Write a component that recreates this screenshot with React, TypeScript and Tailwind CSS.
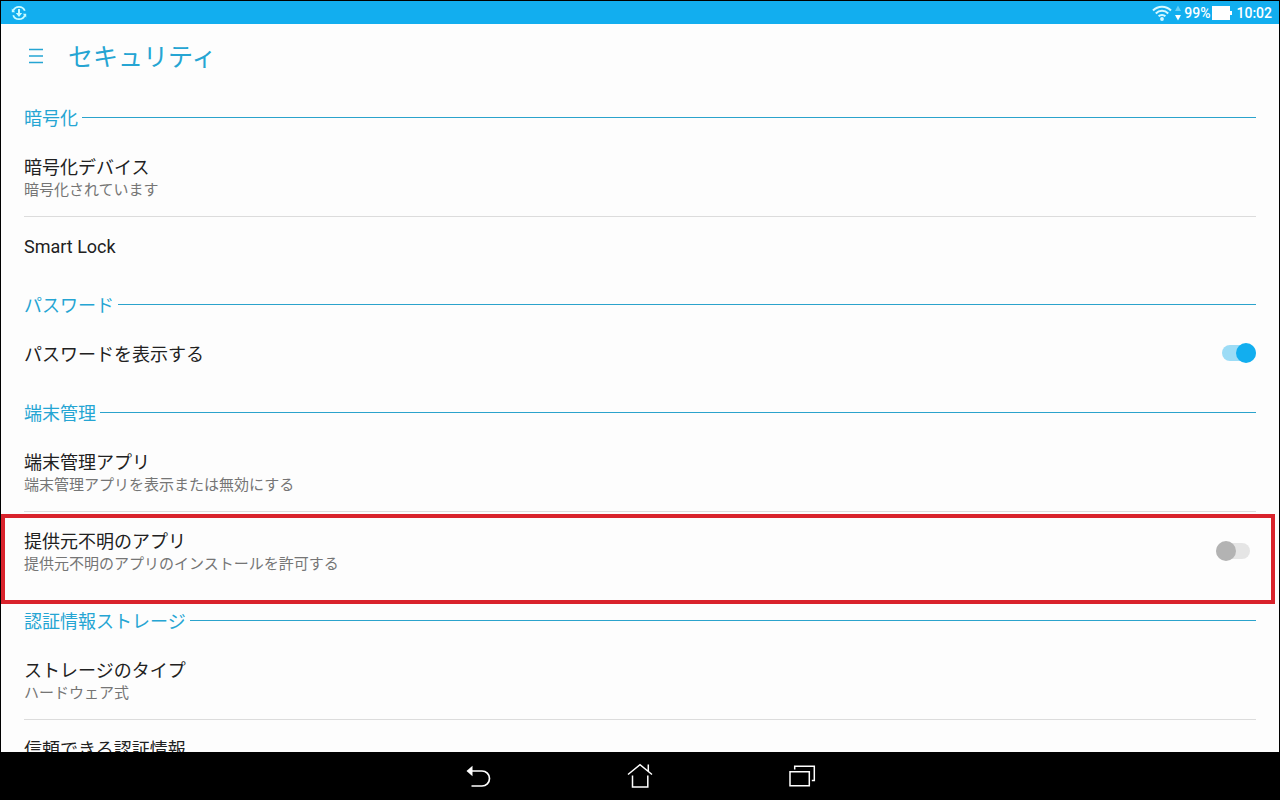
import { useState, type ReactNode } from "react";

function StatusBar() {
  return (
    <div className="flex h-[23px] shrink-0 items-center bg-[#12aeef] pl-1.5 pr-[7px] text-white">
      <svg viewBox="0 0 16 16" className="ml-1 size-4" fill="none" stroke="#c9fbff" strokeWidth="1.8" aria-hidden="true">
        <path d="M2.2 5.8A6.2 6.2 0 0 1 13.8 5.8M13.8 10.2A6.2 6.2 0 0 1 2.2 10.2" />
        <path d="M8 4v5.5" strokeWidth="2" />
        <path d="M4.8 8h6.4L8 12zM.8 3.6v3.6h3.4zM15.2 12.4V8.8h-3.4z" fill="#c9fbff" stroke="none" />
      </svg>
      <div className="ml-auto flex items-center text-sm font-medium">
        <svg viewBox="0 0 20 16" className="h-4 w-5" fill="none" stroke="#d5f8ff" strokeWidth="2" aria-hidden="true">
          <path d="M1 5.5a12.5 12.5 0 0 1 18 0M3.8 8.5a8.6 8.6 0 0 1 12.4 0M6.6 11.3a4.8 4.8 0 0 1 6.8 0" />
          <circle cx="10" cy="14" r="1.9" fill="#d5f8ff" stroke="none" />
        </svg>
        <svg viewBox="0 0 8 16" className="mx-0.5 h-4 w-2" aria-hidden="true">
          <path d="M4 .5l3 5.5H1z" fill="#67d0f6" />
          <path d="M4 15.5l3-5.5H1z" fill="#fff" />
        </svg>
        <span>99%</span>
        <svg viewBox="0 0 20 14" className="ml-0.5 h-3.5 w-5" fill="#fff" aria-hidden="true">
          <path d="M0 0h18v5h2v4h-2v5H0z" />
        </svg>
        <span className="ml-1">10:02</span>
      </div>
    </div>
  );
}

function Section({ title, children }: { title: string; children: ReactNode }) {
  return (
    <section>
      <div className="flex h-12 items-center gap-1 pt-1.5">
        <h2 className="pt-1 text-lg leading-6 text-[#25a5d3]">{title}</h2>
        <span className="h-px flex-1 bg-[#2ba3cc]" />
      </div>
      {children}
    </section>
  );
}

function Item({ title, summary, divider }: { title: string; summary?: string; divider?: boolean }) {
  return (
    <button
      type="button"
      className={`block w-full text-left ${divider ? "border-b border-[#dcdcdc]" : ""} ${
        summary ? "pt-[18px] pb-4" : "py-[18px]"
      }`}
    >
      <span className="block text-lg leading-6 text-[#212121]">{title}</span>
      {summary && <span className="block text-[15px] leading-5 text-[#757575]">{summary}</span>}
    </button>
  );
}

function Switch({ id, defaultChecked = false }: { id: string; defaultChecked?: boolean }) {
  const [checked, setChecked] = useState(defaultChecked);
  return (
    <input
      id={id}
      type="checkbox"
      role="switch"
      checked={checked}
      onChange={(e) => setChecked(e.target.checked)}
      className="relative h-5 w-[34px] shrink-0 appearance-none before:absolute before:inset-x-0 before:inset-y-0.5 before:rounded-full before:bg-[#e5e5e5] after:absolute after:left-0 after:top-0 after:size-5 after:rounded-full after:bg-[#b3b3b3] checked:before:bg-[#9cdcf6] checked:after:left-auto checked:after:right-0 checked:after:bg-[#12aeef]"
    />
  );
}

export default function App() {
  return (
    <div className="flex h-screen flex-col border-x border-t border-black bg-[#fdfdfd] font-['Roboto','Noto_Sans_CJK_JP',sans-serif]">
      <StatusBar />
      <header className="flex h-[66px] shrink-0 items-center px-[27px]">
        <button type="button" aria-label="メニュー" className="pb-0.5">
          <svg viewBox="0 0 16 16" className="size-4" stroke="#25a5d3" strokeWidth="1.3" aria-hidden="true">
            <path d="M1 1.5h14M1 8h14M1 14.5h14" />
          </svg>
        </button>
        <h1 className="ml-6 pt-0.5 text-[25px] leading-8 text-[#25a5d3]">セキュリティ</h1>
      </header>

      <main className="min-h-0 flex-1 overflow-hidden">
        <div className="px-[23px]">
          <Section title="暗号化">
            <Item title="暗号化デバイス" summary="暗号化されています" divider />
            <Item title="Smart Lock" />
          </Section>

          <Section title="パスワード">
            <div className="flex items-center justify-between pt-3.5 pb-[18px]">
              <label htmlFor="show-password" className="pt-1 text-lg leading-6 text-[#212121]">
                パスワードを表示する
              </label>
              <Switch id="show-password" defaultChecked />
            </div>
          </Section>

          <Section title="端末管理">
            <Item title="端末管理アプリ" summary="端末管理アプリを表示または無効にする" divider />
            <div className="relative flex items-center justify-between pt-4 pb-[19px]">
              <label htmlFor="unknown-sources" className="pt-0.5">
                <span className="block text-lg leading-6 text-[#212121]">提供元不明のアプリ</span>
                <span className="block text-[15px] leading-5 text-[#757575]">
                  提供元不明のアプリのインストールを許可する
                </span>
              </label>
              <div className="mr-1.5 flex">
                <Switch id="unknown-sources" />
              </div>
              <div className="pointer-events-none absolute -left-[23px] -right-[19px] top-0.5 h-[90px] border-4 border-[#d9232c]" />
            </div>
          </Section>

          <Section title="認証情報ストレージ">
            <Item title="ストレージのタイプ" summary="ハードウェア式" divider />
            <Item title="信頼できる認証情報" />
          </Section>
        </div>
      </main>

      <nav className="flex h-12 shrink-0 items-center justify-center gap-[130px] bg-black">
        <button type="button" aria-label="戻る">
          <svg viewBox="0 0 32 32" className="size-8" fill="none" stroke="#fff" strokeWidth="1.7" aria-hidden="true">
            <path d="M8 11h12a7.5 7.5 0 0 1 0 15H9.5" />
            <path d="M4.5 11l6-5.2v10.4z" fill="#fff" stroke="none" />
          </svg>
        </button>
        <button type="button" aria-label="ホーム">
          <svg viewBox="0 0 32 32" className="size-8" fill="none" stroke="#fff" strokeWidth="1.5" aria-hidden="true">
            <path d="M4 14.5L16 4.7l12 9.8M24.3 4.5v7" />
            <path d="M8.5 15.5V27h15.3V15.5" />
          </svg>
        </button>
        <button type="button" aria-label="最近使ったアプリ">
          <svg viewBox="0 0 32 32" className="size-8" fill="none" stroke="#fff" strokeWidth="1.5" aria-hidden="true">
            <path d="M4 11.7h19.3v14H4z" />
            <path d="M8.7 9.5V6.2h19.6v14.3h-2.5" />
          </svg>
        </button>
      </nav>
    </div>
  );
}
